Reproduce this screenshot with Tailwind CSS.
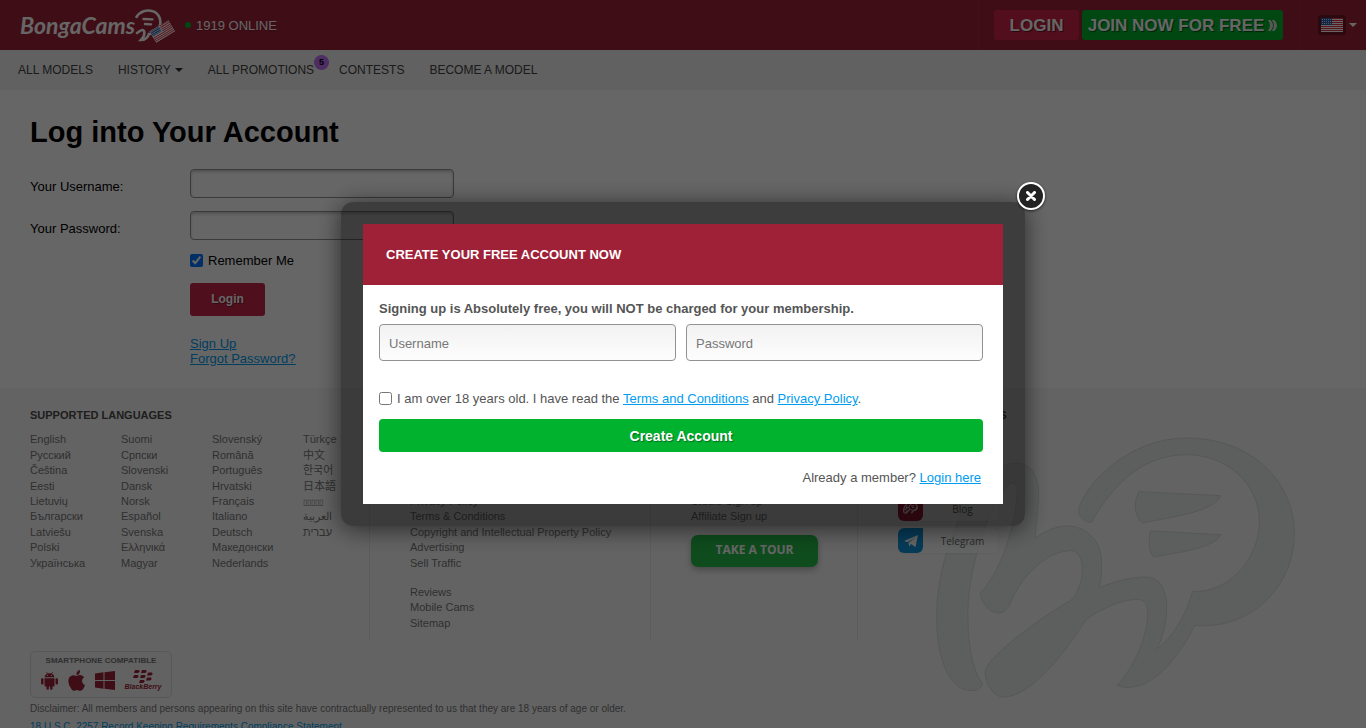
<!DOCTYPE html>
<html lang="en">
<head>
    <meta charset="UTF-8">
    <meta name="viewport" content="width=device-width, initial-scale=1.0">
    <title>BongaCams - Log into Your Account</title>
    <script src="https://cdn.jsdelivr.net/npm/@tailwindcss/browser@4"></script>
</head>
<body class="h-screen overflow-hidden bg-white font-['Liberation_Sans','Noto_Sans_CJK_SC','Noto_Sans_CJK_KR',sans-serif] text-[13px] leading-[15px] text-black">

    <!-- shared svg shapes -->
    <svg class="hidden">
        <symbol id="bc-mark" viewBox="165 110 1080 786">
            <path d="M596 328C610 260 740 113 920 113C1110 113 1243 240 1243 400C1243 560 1110 690 945 675C900 760 830 861 745 861C733 861 720 860 712 855C770 790 803 700 803 640C803 610 795 597 770 597C720 597 660 630 620 655C590 700 470 890 370 890C335 890 312 835 316 810C330 760 500 640 573 600C600 570 610 530 606 495C602 462 590 451 570 451C490 455 420 540 395 600C385 625 370 638 355 638C325 638 300 600 302 577C360 520 410 370 412 270C412 250 400 243 388 252C310 340 268 520 264 620C262 700 270 800 307 850C307 860 295 871 275 871C210 871 168 780 170 640C175 420 300 188 410 188C460 190 478 240 476 290L465 413C500 390 530 377 560 377C620 377 665 420 665 490C665 530 660 550 658 562C700 545 750 530 800 530C840 530 860 570 860 620C860 670 845 720 830 747C880 710 920 640 938 573C1040 580 1138 480 1138 365C1138 250 1040 163 920 163C790 163 700 250 635 365C620 370 593 350 596 328Z"/>
            <path d="M776 274Q764 300 766 322Q768 352 788 368L905 345Q1008 322 1022 286Z"/>
            <path d="M812 392Q806 410 808 432Q808 458 822 470L905 455Q1008 435 1022 403Z"/>
        </symbol>
        <symbol id="us-flag" viewBox="0 0 22 14" preserveAspectRatio="none">
            <path fill="#fff" d="M0 0h22v14H0z"/>
            <path stroke="#e0304a" d="M0 .5h22M0 2.5h22M0 4.5h22M0 6.5h22M0 8.5h22M0 10.5h22M0 12.5h22"/>
            <path fill="#2a5aa8" d="M0 0h11v7H0z"/>
            <path stroke="#dbe4f5" stroke-dasharray="1 1" d="M1 1.5h10M1 3.5h10M1 5.5h10"/>
        </symbol>
    </svg>

    <!-- header -->
    <header class="flex h-[50px] items-center bg-[#9f2137] pl-5 text-white">
        <a href="#" class="flex w-[165px] items-center">
            <span class="font-['Lato',sans-serif] text-[23px] leading-[30px] font-bold italic">BongaCams</span>
            <svg class="h-[38px] w-[40px] shrink-0" viewBox="0 0 40 38" fill="none" stroke="#fff" stroke-linecap="round">
                <path stroke-width="2.6" d="M1.500 11C5 5 12 3.500 17 5C25 7 27 16 24 22C22 26 18 28 14 28C13 31 10 34 6 34C9 31 10 28 9 25C8 23 6 24 2 27"/>
                <path stroke-width="2.400" d="M8.500 13l9 .4M10 18l6 .4"/>
                <use href="#us-flag" x="16" y="19" width="22" height="13" transform="rotate(-31 27 25)"/>
            </svg>
        </a>
        <div class="flex items-center gap-[5px] text-shadow-xs">
            <span class="size-1.5 rounded-full bg-[#00b22d]"></span>
            <span>1919 ONLINE</span>
        </div>
        <div class="ml-auto flex h-full items-center border-l border-white/5 pl-[15px]">
            <button class="h-[30px] w-[85px] rounded-[3px] bg-[#cd2346] text-[17px] font-bold text-shadow-[1px_1px_1px_#0008]">LOGIN</button>
            <button class="ml-[3px] flex h-[30px] w-[201px] items-center justify-center gap-1 rounded-[3px] bg-[#00b22d] text-[17px] font-bold whitespace-nowrap text-shadow-[1px_1px_1px_#0008]">JOIN NOW FOR FREE
                <svg class="h-[11px] w-[9px]" viewBox="0 0 9 11" fill="#ddd"><path d="M0 0h2.500Q5 3 5 5.500T2.500 11H0Q2 8 2 5.500T0 0zM4 0h2.500Q9 3 9 5.500T6.500 11H4Q6 8 6 5.500T4 0z"/></svg>
            </button>
        </div>
        <div class="ml-4 flex h-full items-center border-l border-white/5 pr-[9px] pl-[18px]">
            <button class="flex items-center gap-[3px]" aria-label="Language">
                <span class="block rounded-[3px] bg-black/30 p-[3px]"><svg class="h-3.5 w-[22px]"><use href="#us-flag"/></svg></span>
                <svg class="h-1 w-2" viewBox="0 0 8 4" fill="#fff"><path d="M0 0h8L4 4z"/></svg>
            </button>
        </div>
    </header>

    <!-- navigation -->
    <nav class="flex h-10 items-center gap-[25px] bg-[#f2f2f2] pl-[18px] text-[12px] text-[#444]">
        <a href="#">ALL MODELS</a>
        <a href="#" class="flex items-center gap-1">HISTORY
            <svg class="h-1 w-2" viewBox="0 0 8 4" fill="#333"><path d="M0 0h8L4 4z"/></svg>
        </a>
        <a href="#" class="relative">ALL PROMOTIONS
            <span class="absolute -top-2 -right-[15px] size-[15px] rounded-full bg-[#c070f5] text-center text-[9px] font-bold text-black">5</span>
        </a>
        <a href="#">CONTESTS</a>
        <a href="#">BECOME A MODEL</a>
    </nav>

    <!-- login form -->
    <main class="h-[298px] px-[30px] pt-[25px]">
        <h1 class="text-[29px] leading-[34px] font-bold">Log into Your Account</h1>
        <form class="mt-5">
            <div class="flex items-center">
                <label for="login-username" class="w-40 pt-1.5">Your Username:</label>
                <input id="login-username" type="text" class="h-[29px] w-[264px] rounded-[4px] border border-[#919191] px-2 inset-shadow-[0_2px_3px_#0003]">
            </div>
            <div class="mt-[13px] flex items-center">
                <label for="login-password" class="w-40 pt-1.5">Your Password:</label>
                <input id="login-password" type="password" class="h-[29px] w-[264px] rounded-[4px] border border-[#919191] px-2 inset-shadow-[0_2px_3px_#0003]">
            </div>
            <div class="ml-40">
                <label class="mt-[13px] flex items-center gap-[5px]"><input type="checkbox" class="size-[13px]" checked> Remember Me</label>
                <button type="button" class="mt-[15px] h-[33px] w-[75px] rounded-[3px] bg-[#c8264a] text-[12px] font-bold text-white text-shadow-[1px_1px_1px_#0006]">Login</button>
                <div class="mt-5 flex flex-col items-start text-[#009cf0] underline">
                    <a href="#">Sign Up</a>
                    <a href="#">Forgot Password?</a>
                </div>
            </div>
        </form>
    </main>

    <!-- footer -->
    <footer class="relative h-[360px] bg-[#f7f7f7] px-[30px] pt-5 text-[11px] text-[#777]">
        <svg class="absolute top-[49px] right-[71px] h-[262px] w-[360px]" fill="#e8ebea" stroke="#d8dada" stroke-width="3"><use href="#bc-mark"/></svg>

        <div class="relative flex h-[233px] leading-[1.4]">
            <section class="w-[340px] border-r border-[#e6e6e6]">
                <h2 class="font-bold text-[#4d4d4d]">SUPPORTED LANGUAGES</h2>
                <div class="mt-[9px] flex *:w-[91px] *:shrink-0">
                    <ul>
                        <li><a href="#">English</a></li>
                        <li><a href="#">Русский</a></li>
                        <li><a href="#">Čeština</a></li>
                        <li><a href="#">Eesti</a></li>
                        <li><a href="#">Lietuvių</a></li>
                        <li><a href="#">Български</a></li>
                        <li><a href="#">Latviešu</a></li>
                        <li><a href="#">Polski</a></li>
                        <li><a href="#">Українська</a></li>
                    </ul>
                    <ul>
                        <li><a href="#">Suomi</a></li>
                        <li><a href="#">Српски</a></li>
                        <li><a href="#">Slovenski</a></li>
                        <li><a href="#">Dansk</a></li>
                        <li><a href="#">Norsk</a></li>
                        <li><a href="#">Español</a></li>
                        <li><a href="#">Svenska</a></li>
                        <li><a href="#">Ελληνικά</a></li>
                        <li><a href="#">Magyar</a></li>
                    </ul>
                    <ul>
                        <li><a href="#">Slovenský</a></li>
                        <li><a href="#">Română</a></li>
                        <li><a href="#">Português</a></li>
                        <li><a href="#">Hrvatski</a></li>
                        <li><a href="#">Français</a></li>
                        <li><a href="#">Italiano</a></li>
                        <li><a href="#">Deutsch</a></li>
                        <li><a href="#">Македонски</a></li>
                        <li><a href="#">Nederlands</a></li>
                    </ul>
                    <ul>
                        <li><a href="#">Türkçe</a></li>
                        <li><a href="#">中文</a></li>
                        <li><a href="#">한국어</a></li>
                        <li><a href="#">日本語</a></li>
                        <li><a href="#" class="text-[8px]">▯▯▯▯▯</a></li>
                        <li><a href="#">العربية</a></li>
                        <li><a href="#">עברית</a></li>
                    </ul>
                </div>
            </section>
            <section class="w-[281px] border-r border-[#e6e6e6] pl-10">
                <h2 class="font-bold text-[#4d4d4d]">LEGAL &amp; SAFETY</h2>
                <ul class="mt-[9px]">
                    <li><a href="#">About Us</a></li>
                    <li><a href="#">Support</a></li>
                    <li><a href="#">Billing</a></li>
                    <li><a href="#">Parental Control</a></li>
                    <li><a href="#">Privacy Policy</a></li>
                    <li><a href="#">Terms &amp; Conditions</a></li>
                    <li><a href="#">Copyright and Intellectual Property Policy</a></li>
                    <li><a href="#">Advertising</a></li>
                    <li><a href="#">Sell Traffic</a></li>
                </ul>
                <ul class="mt-3.5">
                    <li><a href="#">Reviews</a></li>
                    <li><a href="#">Mobile Cams</a></li>
                    <li><a href="#">Sitemap</a></li>
                </ul>
            </section>
            <section class="w-[207px] border-r border-[#e6e6e6] pl-10">
                <h2 class="font-bold text-[#4d4d4d]">WORK WITH US</h2>
                <ul class="mt-[9px]">
                    <li><a href="#">Model Sign up</a></li>
                    <li><a href="#">Model Login</a></li>
                    <li><a href="#">Studio Login</a></li>
                    <li><a href="#">Affiliate Login</a></li>
                    <li><a href="#">Studio Sign up</a></li>
                    <li><a href="#">Affiliate Sign up</a></li>
                </ul>
                <button class="mt-2.5 h-8 w-[127px] rounded-[7px] bg-[#25be49] font-['Open_Sans',sans-serif] text-[12px] font-bold text-white shadow-[0_3px_6px_#0004]">TAKE A TOUR</button>
            </section>
            <section class="pl-10">
                <h2 class="font-bold text-[#4d4d4d]">SOCIAL NETWORKS</h2>
                <ul class="mt-[9px] flex flex-col gap-[7px] font-['Open_Sans',sans-serif] text-[10px] text-[#666] *:w-[100px] *:rounded-[6px] *:bg-white/70 *:shadow-xs">
                    <li><a href="#" class="flex h-[25px] items-center"><span class="size-[25px] rounded-[6px] bg-[#1c9bef]"></span><span class="flex-1 text-center">Twitter</span></a></li>
                    <li><a href="#" class="flex h-[25px] items-center"><span class="size-[25px] rounded-[6px] bg-[#d6256b]"></span><span class="flex-1 text-center">Instagram</span></a></li>
                    <li><a href="#" class="flex h-[25px] items-center">
                        <span class="flex size-[25px] items-center justify-center rounded-[6px] rounded-tr-none bg-[#b01c3c]">
                            <svg class="h-[11px] w-[15px]" fill="#fff"><use href="#bc-mark"/></svg>
                        </span>
                        <span class="flex-1 pl-1 text-center">Blog</span>
                    </a></li>
                    <li><a href="#" class="flex h-[25px] items-center">
                        <span class="flex size-[25px] items-center justify-center rounded-[6px] rounded-tr-none bg-[#0e95dc]">
                            <svg class="h-3 w-3.5" viewBox="0 0 14 12" fill="#fff"><path d="M0 6L14 0L11.500 12L7 9L5.200 11.500L4.500 8L11 2.500L3.500 7.200z"/></svg>
                        </span>
                        <span class="flex-1 pl-1 text-center">Telegram</span>
                    </a></li>
                </ul>
            </section>
        </div>

        <!-- supported phones -->
        <div class="relative mt-2.5 flex h-[47px] w-[142px] flex-col items-center rounded-[5px] border border-[#dcdcdc] bg-[#f4f4f4]">
            <p class="mt-[3px] text-[8px] leading-[11px] font-bold text-[#777]">SMARTPHONE COMPATIBLE</p>
            <div class="mt-1 flex items-center gap-2.5 text-[#9f2137]">
                <svg class="h-[19px] w-[17px]" viewBox="0 0 17 21" preserveAspectRatio="none" fill="currentColor">
                    <path d="M3.500 7A5 5 0 0 1 6 3L5 1.300L5.500 1L6.500 2.700Q8.500 2 10.500 2.700L11.500 1L12 1.300L11 3A5 5 0 0 1 13.500 7z"/>
                    <path d="M3.500 8h10v8q0 1-1 1H11.500v2.500a1.200 1.200 0 0 1-2.400 0V17H7.900v2.500a1.200 1.200 0 0 1-2.400 0V17H4.500q-1 0-1-1z"/>
                    <rect x="0" y="8" width="2.500" height="7" rx="1.200"/><rect x="14.500" y="8" width="2.500" height="7" rx="1.200"/>
                    <circle cx="6.500" cy="5" r=".6" fill="#f4f4f4"/><circle cx="10.500" cy="5" r=".6" fill="#f4f4f4"/>
                </svg>
                <svg class="h-[21px] w-[17px]" viewBox="0 0 17 21" fill="currentColor">
                    <path d="M12 0Q12.300 4.500 8.500 5Q8 1 12 0ZM8.700 6Q10 5 12.300 5Q15 5.200 16.200 7.200Q13.700 8.800 14 11.300Q14.300 14 17 15Q15.500 20 12.500 20.800Q11 21 10 20.300Q8.700 19.800 7.200 20.500Q5.500 21.500 3.700 19.500Q.3 15.500.3 11Q.6 6 4.800 5.200Q6.500 5 8.700 6Z"/>
                </svg>
                <svg class="h-[19px] w-5" viewBox="0 0 20 19" fill="currentColor">
                    <path d="M0 2.500L8.500 1.300V9H0zM9.500 1.200L20 0V9H9.500zM0 10h8.500v7.700L0 16.500zM9.500 10H20v9L9.500 17.800z"/>
                </svg>
                <div class="flex w-9 flex-col items-center">
                    <svg class="h-[13px] w-5" viewBox="0 0 20 13" fill="currentColor">
                        <path d="M2 0h4q1.500 2-1 3H1zM9 0h4q1.500 2-1 3H8zM1 5h4q1.500 2-1 3H0zM8 5h4q1.500 2-1 3H7zM15 2.500h4q1.500 2-1 3H14zM14 7.500h4q1.500 2-1 3H13zM7 10h4q1.500 2-1 3H6z"/>
                    </svg>
                    <span class="text-[7px] leading-[8px] font-bold italic">BlackBerry</span>
                </div>
            </div>
        </div>
        <div class="relative mt-[3px] text-[10px]">
            <p>Disclaimer: All members and persons appearing on this site have contractually represented to us that they are 18 years of age or older.</p>
            <a href="#" class="mt-[3px] block text-[#009cf0]">18 U.S.C. 2257 Record Keeping Requirements Compliance Statement</a>
        </div>
    </footer>

    <!-- sign up popup -->
    <div class="fixed inset-0 flex items-center justify-center bg-black/60">
        <div role="dialog" aria-labelledby="popup-title" class="relative w-[684px] rounded-[12px] bg-black/40 p-[22px] text-[#555] shadow-[0_3px_25px_#0009]">
            <button class="absolute -top-5 -right-5 flex size-7 items-center justify-center rounded-full border-2 border-white bg-[#222] shadow-[0_1px_3px_#000a]" aria-label="Close">
                <svg class="size-2.5" viewBox="0 0 10 10" stroke="#fff" stroke-width="3" stroke-linecap="round"><path d="M1.500 1.500l7 7M8.500 1.500l-7 7"/></svg>
            </button>
            <h2 id="popup-title" class="bg-[#9f2137] px-[23px] py-[23px] font-bold text-white">CREATE YOUR FREE ACCOUNT NOW</h2>
            <form class="bg-white pt-4 pr-5 pb-[19px] pl-4">
                <p class="font-bold">Signing up is Absolutely free, you will NOT be charged for your membership.</p>
                <div class="mt-2 grid grid-cols-2 gap-2.5">
                    <input type="text" placeholder="Username" aria-label="Username" class="h-[37px] rounded-[4px] border border-[#929292] bg-linear-to-b from-[#f2f2f2] to-[#fdfdfd] px-[9px] pt-0.5 placeholder:text-[#777]">
                    <input type="password" placeholder="Password" aria-label="Password" class="h-[37px] rounded-[4px] border border-[#929292] bg-linear-to-b from-[#f2f2f2] to-[#fdfdfd] px-[9px] pt-0.5 placeholder:text-[#777]">
                </div>
                <div class="mt-[30px] flex items-center gap-[5px]">
                    <input id="age-confirm" type="checkbox" class="size-[13px]">
                    <label for="age-confirm">I am over 18 years old. I have read the <a href="#" class="text-[#009cf0] underline">Terms and Conditions</a> and <a href="#" class="text-[#009cf0] underline">Privacy Policy</a>.</label>
                </div>
                <button type="button" class="mt-[13px] block h-[33px] w-full rounded-[4px] bg-[#00b22d] pt-0.5 text-[14px] font-bold text-white text-shadow-[1px_1px_1px_#0006]">Create Account</button>
                <p class="mt-[18px] pr-0.5 text-right">Already a member? <a href="#" class="text-[#009cf0] underline">Login here</a></p>
            </form>
        </div>
    </div>
</body>
</html>
